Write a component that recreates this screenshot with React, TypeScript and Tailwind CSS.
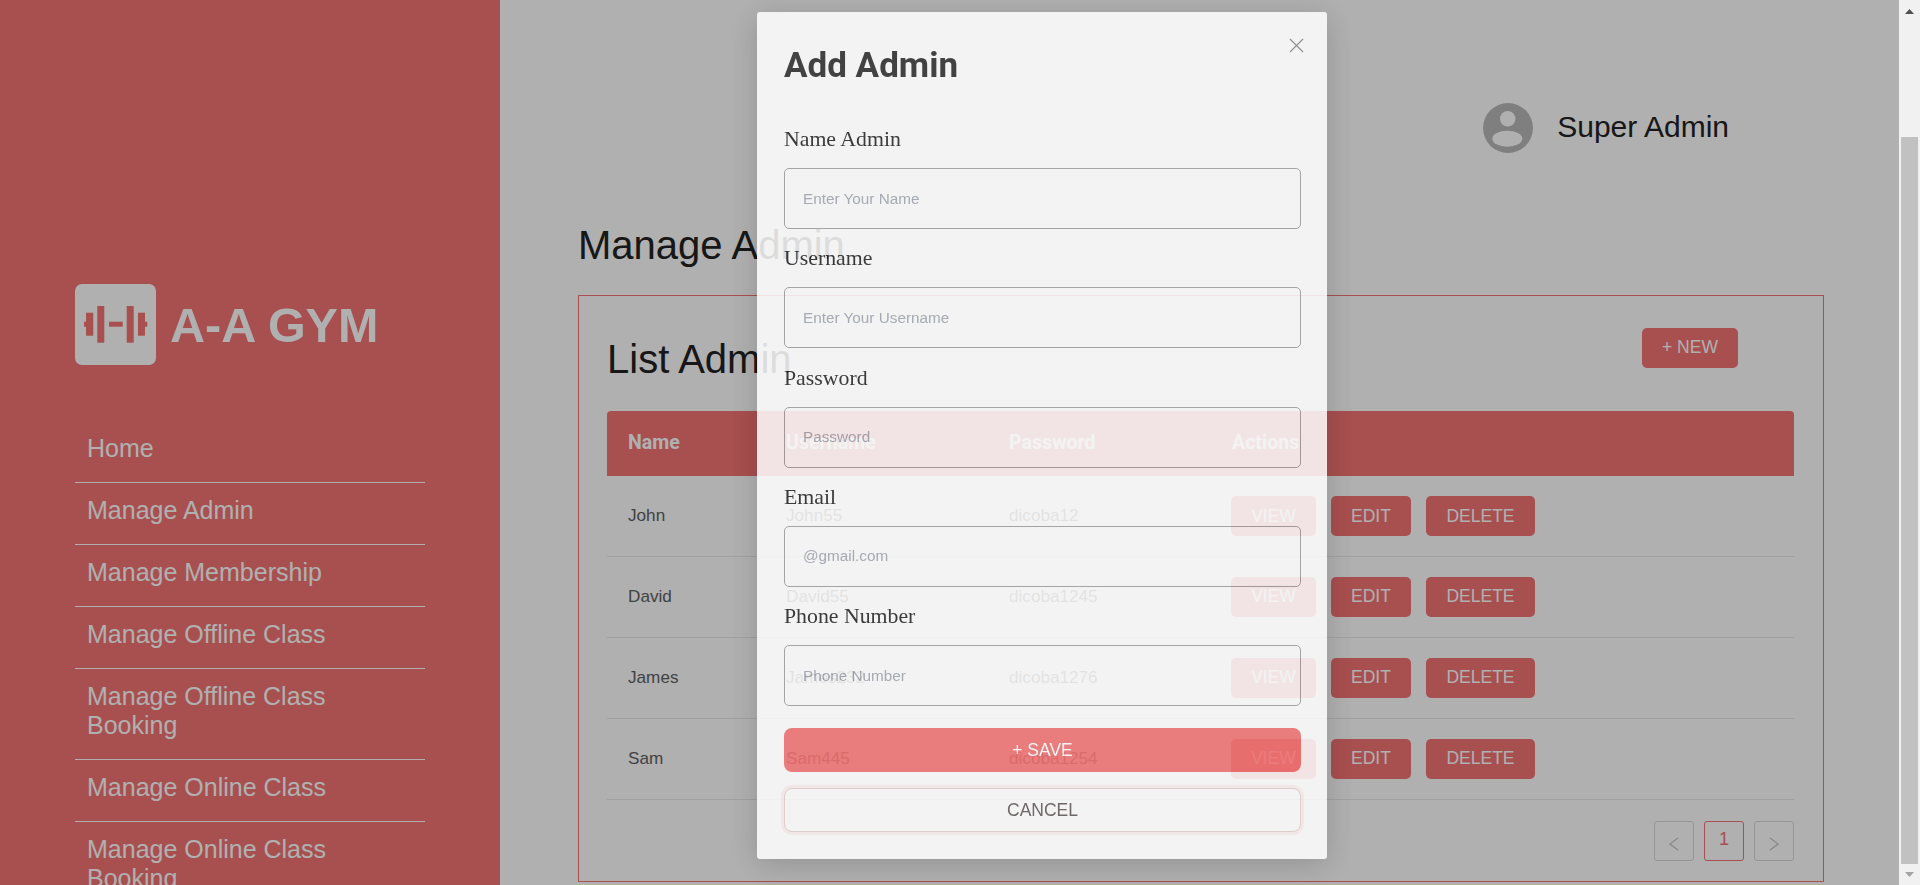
import { X } from "lucide-react";

const navItems = [
  "Home",
  "Manage Admin",
  "Manage Membership",
  "Manage Offline Class",
  "Manage Offline Class Booking",
  "Manage Online Class",
  "Manage Online Class Booking",
];

const admins = [
  { name: "John", username: "John55", password: "dicoba12" },
  { name: "David", username: "David55", password: "dicoba1245" },
  { name: "James", username: "James232", password: "dicoba1276" },
  { name: "Sam", username: "Sam445", password: "dicoba1254" },
];

const fields = [
  { label: "Name Admin", placeholder: "Enter Your Name" },
  { label: "Username", placeholder: "Enter Your Username" },
  { label: "Password", placeholder: "Password" },
  { label: "Email", placeholder: "@gmail.com" },
  { label: "Phone Number", placeholder: "Phone Number" },
];

function Logo() {
  return (
    <div className="flex items-center gap-[14px]">
      <svg width="81" height="81" viewBox="0 0 81 81" className="shrink-0">
        <rect width="81" height="81" rx="7" fill="#ffffff" />
        <g fill="#F47373">
          <rect x="9" y="37.7" width="2.5" height="5" />
          <rect x="11" y="28.7" width="7.3" height="23" />
          <rect x="22.3" y="22" width="7" height="36.7" />
          <rect x="34" y="37.7" width="13.7" height="5" />
          <rect x="51.7" y="22" width="7" height="36.7" />
          <rect x="63" y="28.7" width="7" height="23" />
          <rect x="69.8" y="37.7" width="2.5" height="5" />
        </g>
      </svg>
      <span className="pt-[2px] text-[48.5px] leading-none font-bold text-white whitespace-nowrap">A-A GYM</span>
    </div>
  );
}

function Sidebar() {
  return (
    <aside className="w-[500px] shrink-0 h-[885px] overflow-hidden bg-[#F47373] pt-[284px] pl-[75px]">
      <Logo />
      <ul className="mt-[56px] w-[350px]">
        {navItems.map((item) => (
          <li key={item} className="border-b border-white pt-[13px] pb-[19px] px-[12px] text-[25px] leading-[29px] text-white">
            {item}
          </li>
        ))}
      </ul>
    </aside>
  );
}

function ActionButton({ label, width }: { label: string; width: string }) {
  return (
    <button className={`${width} h-10 rounded-[5px] bg-[#F47373] text-white text-[17.5px]`}>{label}</button>
  );
}

function AdminTable() {
  return (
    <table className="w-[1187px] table-fixed border-collapse">
      <thead>
        <tr className="h-[65px] bg-[#F47373] text-white text-left text-[19.6px] font-['Roboto',sans-serif] font-bold">
          <th className="w-[158px] pl-[21px] pb-[2px] rounded-tl-[4px]">Name</th>
          <th className="w-[223px] pl-[21px] pb-[2px]">Username</th>
          <th className="w-[223px] pl-[21px] pb-[2px]">Password</th>
          <th className="pl-[21px] pb-[2px] rounded-tr-[4px]">Actions</th>
        </tr>
      </thead>
      <tbody>
        {admins.map((a) => (
          <tr key={a.name} className="h-[81px] first:h-[80px] border-b border-[#e8e8e8] text-[17.15px] text-[#606060]">
            <td className="pl-[21px]">{a.name}</td>
            <td className="pl-[21px]">{a.username}</td>
            <td className="pl-[21px]">{a.password}</td>
            <td className="pl-5">
              <div className="flex gap-[15px]">
                <ActionButton label="VIEW" width="w-[85px]" />
                <ActionButton label="EDIT" width="w-[80px]" />
                <ActionButton label="DELETE" width="w-[109px]" />
              </div>
            </td>
          </tr>
        ))}
      </tbody>
    </table>
  );
}

function Pagination() {
  return (
    <div className="flex justify-end gap-[10px] mt-[21px] w-[1187px]">
      <button className="w-10 h-10 rounded-[3px] border border-[#d9d9d9] flex items-center justify-center pt-[6px]">
        <svg width="10" height="14" viewBox="0 0 10 14" fill="none">
          <path d="M9 1 1 7l8 6" stroke="#c8c8c8" strokeWidth="1.4" />
        </svg>
      </button>
      <button className="w-10 h-10 rounded-[3px] border border-[#F47373] text-[#F47373] text-[18px] pb-[2px]">1</button>
      <button className="w-10 h-10 rounded-[3px] border border-[#d9d9d9] flex items-center justify-center pt-[6px]">
        <svg width="10" height="14" viewBox="0 0 10 14" fill="none">
          <path d="m1 1 8 6-8 6" stroke="#c8c8c8" strokeWidth="1.4" />
        </svg>
      </button>
    </div>
  );
}

function Main() {
  return (
    <main className="flex-1 h-[885px] overflow-hidden bg-white pl-[78px] pr-[75px] pt-[103px] text-[#222222]">
      <div className="flex items-center justify-end gap-[24px] h-[50px] pr-[95px]">
        <svg width="50" height="50" viewBox="0 0 50 50">
          <circle cx="25" cy="25" r="25" fill="#b9b9b9" />
          <circle cx="24.7" cy="15.7" r="7.7" fill="#ffffff" />
          <ellipse cx="24.3" cy="35.7" rx="15" ry="8" fill="#ffffff" />
        </svg>
        <span className="pb-[2px] text-[30px] leading-none">Super Admin</span>
      </div>
      <h1 className="mt-[69px] mb-[26px] text-[40px] leading-[47px]">Manage Admin</h1>
      <section className="h-[587px] border border-[#F47373] pl-[28px] pt-[32px]">
        <div className="flex items-start justify-between w-[1187px] mb-[28px]">
          <h2 className="mt-[8px] text-[40px] leading-[47px]">List Admin</h2>
          <button className="w-[96px] h-10 mr-[56px] pb-[2px] rounded-[5px] bg-[#F47373] text-white text-[17.5px]">+ NEW</button>
        </div>
        <AdminTable />
        <Pagination />
      </section>
    </main>
  );
}

function AddAdminModal() {
  return (
    <div className="absolute left-[757px] top-[12px] w-[570px] h-[847px] rounded-[3px] bg-white opacity-85 blur-[0.6px] shadow-[0_5px_30px_rgba(0,0,0,0.2)] pl-[27px] pr-[26px] pt-[33px]">
      <button className="absolute right-[18px] top-[21px] text-[#8a8a8a]">
        <X size={25} strokeWidth={1.1} />
      </button>
      <h3 className="mb-[40px] font-['Roboto',sans-serif] font-bold text-[35px] leading-[41px] text-[#2f2f2f]">Add Admin</h3>
      {fields.map((f) => (
        <div key={f.label} className="mb-[16.3px]">
          <label className="block mb-4 font-['Liberation_Serif',serif] text-[21.8px] leading-[26px] text-[#272727]">{f.label}</label>
          <input
            className="block w-full h-[61px] rounded-[5px] border-[1.5px] border-[#a3a3a3] bg-transparent pl-[18px] text-[15.3px] placeholder:text-[#a4a9b4]"
            placeholder={f.placeholder}
          />
        </div>
      ))}
      <button className="block w-full h-[44px] mt-[22px] rounded-[8px] bg-[#F47373] text-white text-[17.5px]">+ SAVE</button>
      <button className="block w-full h-[44px] mt-4 rounded-[8px] border border-[#e9d2d2] bg-white shadow-[0_0_0_3px_rgba(244,115,115,0.1)] text-[#665c5c] text-[17.5px]">CANCEL</button>
    </div>
  );
}

function Scrollbar() {
  return (
    <div className="w-[21px] h-[885px] shrink-0 bg-[#f1f1f1] flex flex-col items-center">
      <div className="h-[137px] w-full flex justify-center pt-[9px]">
        <svg width="9" height="5" viewBox="0 0 9 5"><path d="M4.5 0 9 5H0z" fill="#505050" /></svg>
      </div>
      <div className="w-[17px] h-[727px] bg-[#c1c1c1]" />
      <div className="h-[21px] w-full flex justify-center pt-[8px]">
        <svg width="9" height="5" viewBox="0 0 9 5"><path d="M4.5 5 9 0H0z" fill="#a3a3a3" /></svg>
      </div>
    </div>
  );
}

export default function App() {
  return (
    <div className="flex h-[885px] overflow-hidden font-['Liberation_Sans',Arial,sans-serif]">
      <div className="relative flex flex-1 min-w-0">
        <Sidebar />
        <Main />
        <div className="absolute inset-0 bg-black/31" />
        <AddAdminModal />
      </div>
      <Scrollbar />
    </div>
  );
}
